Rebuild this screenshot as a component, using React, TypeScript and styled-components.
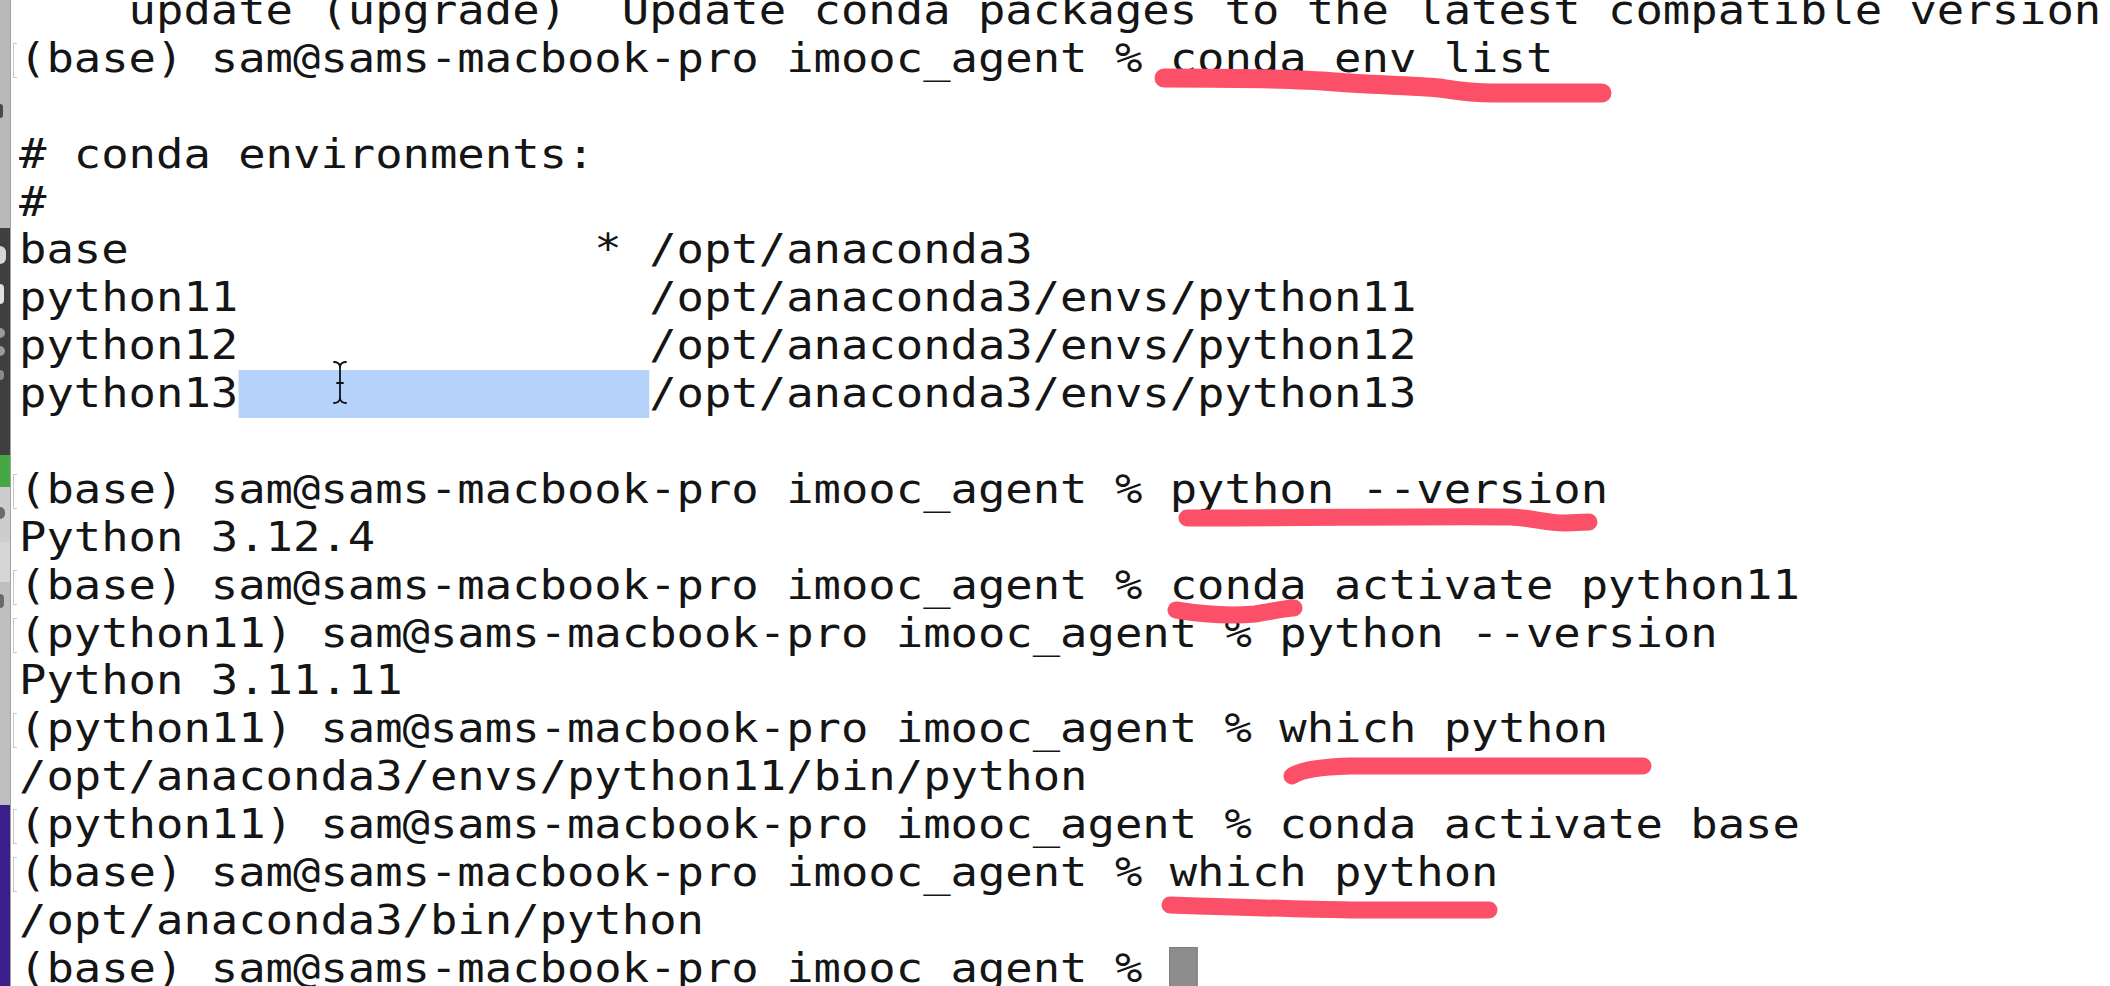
import styled, { createGlobalStyle } from "styled-components";

const CHAR_W = 27.4;
const LINE_H = 47.9;
const FONT_PX = 40;
const STRETCH = CHAR_W / (FONT_PX * 0.6021);

const GlobalStyle = createGlobalStyle`
  html, body {
    margin: 0;
    padding: 0;
    background: #fff;
    overflow: hidden;
  }
  #root {
    width: 2110px;
    height: 986px;
  }
`;

const Screen = styled.div`
  position: relative;
  display: flex;
  width: 2110px;
  height: 986px;
  overflow: hidden;
  background: #fff;
`;

// the window peeking out behind the terminal on the left
const Backdrop = styled.aside`
  flex: 0 0 10px;
  display: flex;
  flex-direction: column;
  overflow: hidden;
  border-right: 1px solid #a3a3a3;
`;

const Segment = styled.div<{ $h?: number; $bg: string }>`
  flex: ${(p) => (p.$h ? `0 0 ${p.$h}px` : "1 1 auto")};
  background: ${(p) => p.$bg};
  display: flex;
  flex-direction: column;
  align-items: flex-start;
  overflow: hidden;
`;

// bits of the letters of the window behind, cut by the terminal's edge
const Glimpse = styled.span<{ $top: number; $w: number; $h: number; $c: string }>`
  display: block;
  margin-top: ${(p) => p.$top}px;
  width: ${(p) => p.$w}px;
  height: ${(p) => p.$h}px;
  border-radius: 0 ${(p) => p.$h / 2}px ${(p) => p.$h / 2}px 0;
  background: ${(p) => p.$c};
`;

const Terminal = styled.main`
  flex: 1 1 auto;
  min-width: 0;
  height: 100%;
  overflow: hidden;
  background: #fff;
  font-family: "DejaVu Sans Mono", "Liberation Mono", monospace;
  font-size: ${FONT_PX}px;
  color: #151515;
`;

const Scrollback = styled.div`
  display: flex;
  flex-direction: column;
  margin-top: -13px;
`;

const Row = styled.div`
  display: flex;
  height: ${LINE_H}px;
  line-height: ${LINE_H}px;
`;

const Gutter = styled.div`
  flex: 0 0 8px;
  box-sizing: border-box;
  padding: 8px 0 0 2px;
`;

const PromptMark = styled.span`
  display: block;
  width: 4px;
  height: 35px;
  box-sizing: border-box;
  border: 1.5px solid #c6c6c6;
  border-right: none;
`;

const Text = styled.div`
  white-space: pre;
  transform: scaleX(${STRETCH});
  transform-origin: left center;
`;

const Selection = styled.span`
  display: inline-block;
  vertical-align: top;
  height: ${LINE_H}px;
  background: #b4d2fa;
`;

const Cursor = styled.span`
  display: inline-block;
  vertical-align: top;
  width: ${FONT_PX * 0.6021}px;
  height: 46px;
  margin-top: 2px;
  box-sizing: border-box;
  background: #8d8d8d;
  border: 1px solid #7c7c7c;
`;

const Annotations = styled.svg`
  position: absolute;
  inset: 0;
  width: 100%;
  height: 100%;
  pointer-events: none;
`;

type Line = { text?: string; mark?: boolean; select?: [string, string]; cursor?: boolean };

const P_BASE = "(base) sam@sams-macbook-pro imooc_agent % ";
const P_311 = "(python11) sam@sams-macbook-pro imooc_agent % ";

const lines: Line[] = [
  { text: "    update (upgrade)  Update conda packages to the latest compatible version" },
  { text: P_BASE + "conda env list", mark: true },
  {},
  { text: "# conda environments:" },
  { text: "#" },
  { text: "base                 * /opt/anaconda3" },
  { text: "python11               /opt/anaconda3/envs/python11" },
  { text: "python12               /opt/anaconda3/envs/python12" },
  { select: ["python13", "/opt/anaconda3/envs/python13"] },
  {},
  { text: P_BASE + "python --version", mark: true },
  { text: "Python 3.12.4" },
  { text: P_BASE + "conda activate python11", mark: true },
  { text: P_311 + "python --version", mark: true },
  { text: "Python 3.11.11" },
  { text: P_311 + "which python", mark: true },
  { text: "/opt/anaconda3/envs/python11/bin/python" },
  { text: P_311 + "conda activate base", mark: true },
  { text: P_BASE + "which python", mark: true },
  { text: "/opt/anaconda3/bin/python" },
  { text: P_BASE, cursor: true },
];

const strokes = [
  { d: "M1164 78 C1250 78 1300 79 1335 82 C1370 85 1410 85 1440 88 C1460 91 1472 93 1492 93 L1602 93", w: 19 },
  { d: "M1187 518 C1300 518 1450 516 1510 517 C1535 518 1545 523 1565 523 L1589 522", w: 17 },
  { d: "M1176 610 C1200 614 1230 616 1255 614 C1270 612 1285 608 1294 608", w: 17 },
  { d: "M1292 776 C1300 770 1320 767 1350 766 L1643 766", w: 17 },
  { d: "M1170 905 C1230 907 1290 909 1350 910 L1489 910", w: 17 },
];

export default function App() {
  return (
    <>
      <GlobalStyle />
      <Screen>
        <Backdrop>
          <Segment $h={228} $bg="#b9b9b9">
            <Glimpse $top={104} $w={3} $h={14} $c="#4a4a4a" />
          </Segment>
          <Segment $h={227} $bg="#3f3f3f">
            <Glimpse $top={18} $w={6} $h={18} $c="#d6d6d6" />
            <Glimpse $top={20} $w={4} $h={20} $c="#e0e0e0" />
            <Glimpse $top={24} $w={5} $h={10} $c="#9a9a9a" />
            <Glimpse $top={8} $w={5} $h={10} $c="#9a9a9a" />
            <Glimpse $top={14} $w={4} $h={10} $c="#8a8a8a" />
          </Segment>
          <Segment $h={32} $bg="#46a844" />
          <Segment $h={55} $bg="#cdcdcd">
            <Glimpse $top={20} $w={5} $h={12} $c="#6a6a6a" />
          </Segment>
          <Segment $h={40} $bg="#d6d6d6" />
          <Segment $h={223} $bg="#bfbfbf">
            <Glimpse $top={12} $w={4} $h={14} $c="#6a6a6a" />
          </Segment>
          <Segment $bg="#3a1f8a" />
        </Backdrop>

        <Terminal>
          <Scrollback>
            {lines.map((line, i) => (
              <Row key={i}>
                <Gutter>{line.mark && <PromptMark />}</Gutter>
                <Text>
                  {line.text}
                  {line.select && (
                    <>
                      {line.select[0]}
                      <Selection>{" ".repeat(15)}</Selection>
                      {line.select[1]}
                    </>
                  )}
                  {line.cursor && <Cursor />}
                </Text>
              </Row>
            ))}
          </Scrollback>
        </Terminal>

        <Annotations viewBox="0 0 2110 986">
          {strokes.map((s, i) => (
            <path key={i} d={s.d} fill="none" stroke="#fb5067" strokeWidth={s.w} strokeLinecap="round" strokeLinejoin="round" />
          ))}
          {/* I-beam pointer over the selection */}
          <g fill="none" stroke="#111" strokeWidth={1.8} strokeLinecap="round">
            <path d="M334 362 C337 362 339 363 340 366 C341 363 343 362 346 362" />
            <path d="M340 366 L340 399" />
            <path d="M334 403 C337 403 339 402 340 399 C341 402 343 403 346 403" />
            <path d="M337 383 L343 383" />
          </g>
        </Annotations>
      </Screen>
    </>
  );
}
